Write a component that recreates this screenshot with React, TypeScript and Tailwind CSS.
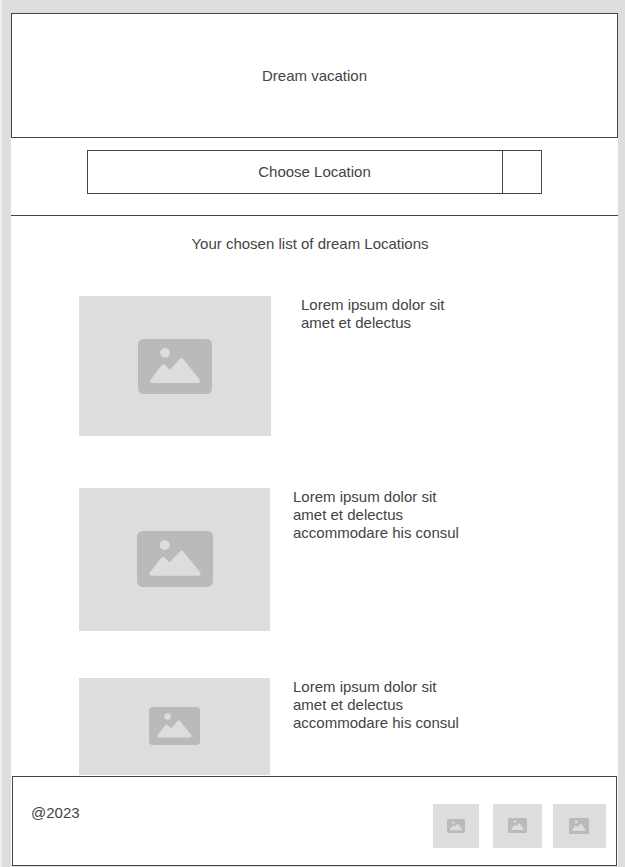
import React from "react";

function ImageIcon({ className }: { className: string }) {
  return (
    <svg viewBox="0 0 74 55" preserveAspectRatio="none" className={className} aria-hidden="true">
      <rect width="74" height="55" rx="5.5" fill="#bababa" />
      <circle cx="27" cy="13.8" r="4.8" fill="#dddddd" />
      <path
        d="M14.3 41.8 L25.5 27.6 L32 34 L43.4 21.5 L59.8 41.8 Z"
        fill="#dddddd"
        stroke="#dddddd"
        strokeWidth="4.4"
        strokeLinejoin="round"
      />
    </svg>
  );
}

function Placeholder({ box, icon }: { box: string; icon: string }) {
  return (
    <div className={`flex shrink-0 items-center justify-center bg-[#dddddd] ${box}`}>
      <ImageIcon className={icon} />
    </div>
  );
}

const places = [
  {
    lines: ["Lorem ipsum dolor sit", "amet et delectus"],
    row: "gap-[30px]",
    box: "h-[140px] w-48",
    icon: "h-[55px] w-[74px]",
  },
  {
    lines: ["Lorem ipsum dolor sit", "amet et delectus", "accommodare his consul"],
    row: "mt-[52px] gap-[23px]",
    box: "h-[143px] w-[191px] pb-px",
    icon: "h-14 w-[76px]",
  },
  {
    lines: ["Lorem ipsum dolor sit", "amet et delectus", "accommodare his consul"],
    row: "mt-[47px] gap-[23px]",
    box: "h-[97px] w-[191px] pb-px",
    icon: "h-[38px] w-[51px]",
  },
];

export default function App() {
  return (
    <div className="min-h-screen border-l-2 border-[#eeeeee] bg-[#dddddd] pt-[13px] pr-[7px] pb-px pl-[9px] font-['Liberation_Sans',Arial,sans-serif] text-[15px] leading-[18px] text-[#444444]">
      <div className="bg-white">
        <header className="flex h-[125px] items-center justify-center border border-[#444444]">
          <h1>Dream vacation</h1>
        </header>

        <div className="border-b border-[#444444] px-[76px] pt-3 pb-[21px]">
          <div className="relative h-11">
            <select
              aria-label="Choose Location"
              className="h-full w-full appearance-none border border-[#444444] bg-white text-center"
            >
              <option>Choose Location</option>
            </select>
            <span className="pointer-events-none absolute inset-y-0 right-0 w-10 border border-[#444444]" />
          </div>
        </div>

        <main className="pl-[68px]">
          <h2 className="pt-[19px] pr-[77px] text-center">Your chosen list of dream Locations</h2>
          <ul className="mt-[43px]">
            {places.map((place, i) => (
              <li key={i} className={`flex items-start ${place.row}`}>
                <Placeholder box={place.box} icon={place.icon} />
                <p>
                  {place.lines.map((line) => (
                    <span key={line} className="block">
                      {line}
                    </span>
                  ))}
                </p>
              </li>
            ))}
          </ul>
        </main>

        <footer className="mx-px mt-px flex h-[90px] items-start justify-between border border-[#444444] pt-[27px] pr-[10px] pl-[18px]">
          <p>@2023</p>
          <div className="flex">
            <Placeholder box="h-11 w-[46px]" icon="h-[14px] w-[18px]" />
            <Placeholder box="ml-[14px] h-11 w-[49px] pb-px" icon="h-[15px] w-[19px]" />
            <Placeholder box="ml-[11px] h-11 w-[53px] pr-px pb-px" icon="h-4 w-5" />
          </div>
        </footer>
      </div>
    </div>
  );
}
